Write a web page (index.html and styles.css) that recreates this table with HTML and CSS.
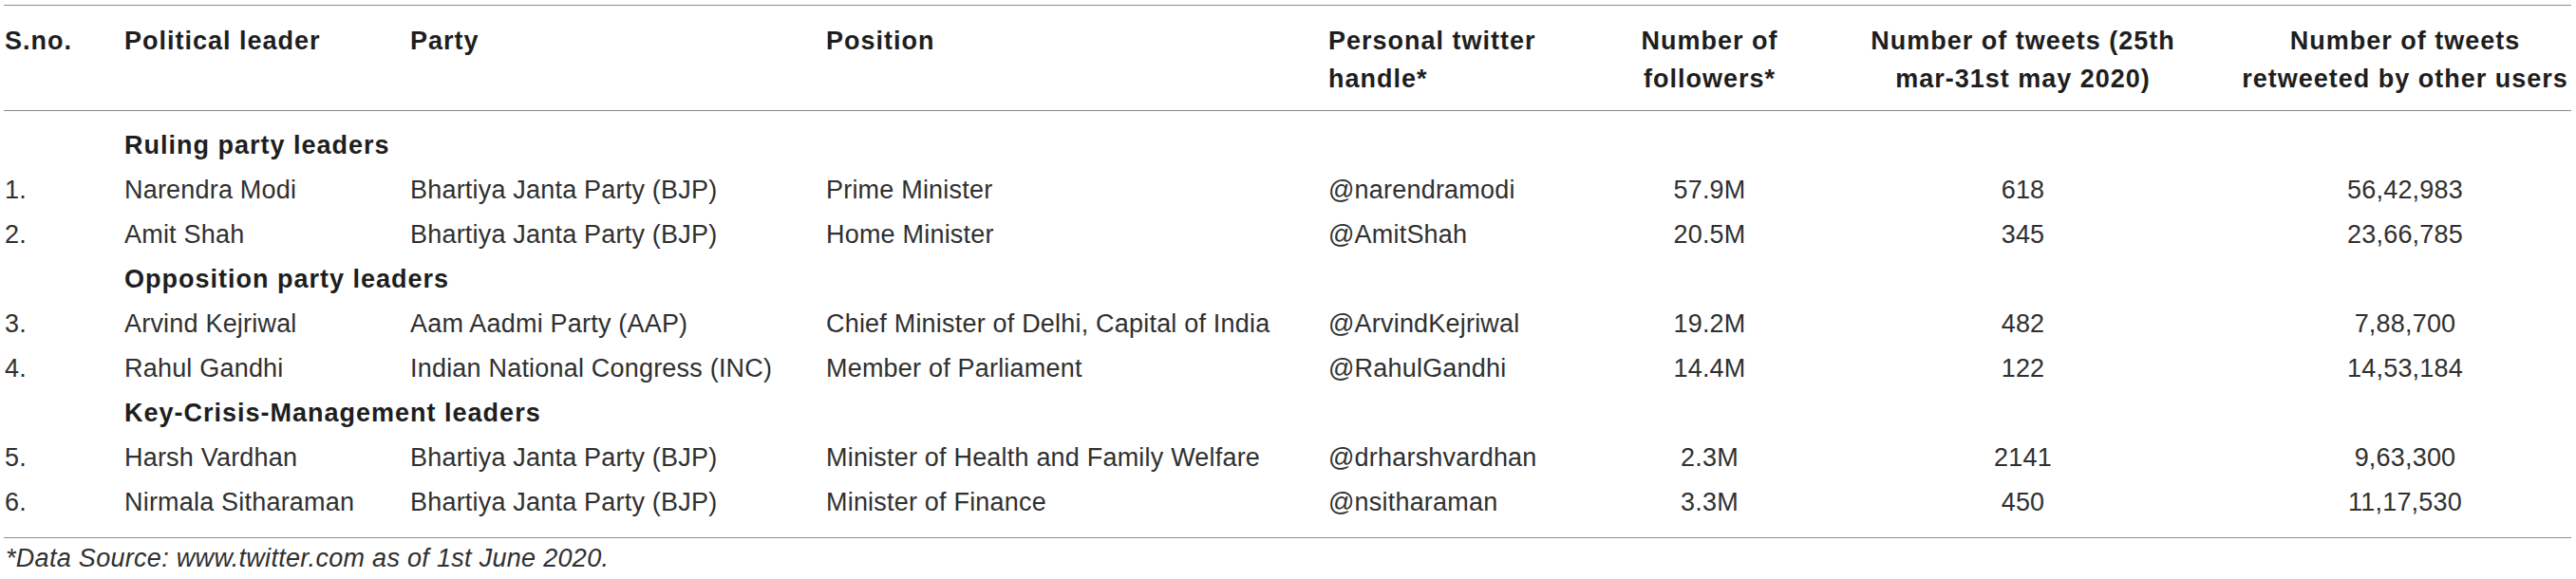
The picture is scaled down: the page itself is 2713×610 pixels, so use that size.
FILE: index.html
```html
<!DOCTYPE html>
<html lang="en">
<head>
<meta charset="utf-8">
<title>Political leaders on Twitter</title>
<link rel="stylesheet" href="styles.css">
</head>
<body>
<div class="wrap">
<table class="leaders">
  <colgroup>
    <col class="c-sno">
    <col class="c-name">
    <col class="c-party">
    <col class="c-pos">
    <col class="c-handle">
    <col class="c-foll">
    <col class="c-tweets">
    <col class="c-rt">
  </colgroup>
  <thead>
    <tr>
      <th>S.no.</th>
      <th>Political leader</th>
      <th>Party</th>
      <th>Position</th>
      <th>Personal twitter<br>handle*</th>
      <th class="num">Number of<br>followers*</th>
      <th class="num">Number of tweets (25th<br>mar-31st may 2020)</th>
      <th class="num rt">Number of tweets<br>retweeted by other users</th>
    </tr>
  </thead>
  <tbody>
    <tr class="group first">
      <td></td>
      <td colspan="7">Ruling party leaders</td>
    </tr>
    <tr>
      <td>1.</td>
      <td>Narendra Modi</td>
      <td>Bhartiya Janta Party (BJP)</td>
      <td>Prime Minister</td>
      <td>@narendramodi</td>
      <td class="num">57.9M</td>
      <td class="num">618</td>
      <td class="num rt">56,42,983</td>
    </tr>
    <tr>
      <td>2.</td>
      <td>Amit Shah</td>
      <td>Bhartiya Janta Party (BJP)</td>
      <td>Home Minister</td>
      <td>@AmitShah</td>
      <td class="num">20.5M</td>
      <td class="num">345</td>
      <td class="num rt">23,66,785</td>
    </tr>
    <tr class="group">
      <td></td>
      <td colspan="7">Opposition party leaders</td>
    </tr>
    <tr>
      <td>3.</td>
      <td>Arvind Kejriwal</td>
      <td>Aam Aadmi Party (AAP)</td>
      <td>Chief Minister of Delhi, Capital of India</td>
      <td>@ArvindKejriwal</td>
      <td class="num">19.2M</td>
      <td class="num">482</td>
      <td class="num rt">7,88,700</td>
    </tr>
    <tr>
      <td>4.</td>
      <td>Rahul Gandhi</td>
      <td>Indian National Congress (INC)</td>
      <td>Member of Parliament</td>
      <td>@RahulGandhi</td>
      <td class="num">14.4M</td>
      <td class="num">122</td>
      <td class="num rt">14,53,184</td>
    </tr>
    <tr class="group">
      <td></td>
      <td colspan="7">Key-Crisis-Management leaders</td>
    </tr>
    <tr>
      <td>5.</td>
      <td>Harsh Vardhan</td>
      <td>Bhartiya Janta Party (BJP)</td>
      <td>Minister of Health and Family Welfare</td>
      <td>@drharshvardhan</td>
      <td class="num">2.3M</td>
      <td class="num">2141</td>
      <td class="num rt">9,63,300</td>
    </tr>
    <tr class="last">
      <td>6.</td>
      <td>Nirmala Sitharaman</td>
      <td>Bhartiya Janta Party (BJP)</td>
      <td>Minister of Finance</td>
      <td>@nsitharaman</td>
      <td class="num">3.3M</td>
      <td class="num">450</td>
      <td class="num rt">11,17,530</td>
    </tr>
  </tbody>
</table>
<p class="footnote">*Data Source: www.twitter.com as of 1st June 2020.</p>
</div>
</body>
</html>
```
FILE: styles.css
```css
html, body {
  margin: 0;
  padding: 0;
  background: #ffffff;
}

body {
  font-family: "Liberation Sans", Arial, Helvetica, sans-serif;
  color: #303030;
}

.wrap {
  padding: 5px 0 0 4px;
}

.leaders {
  width: 2704px;
  table-layout: fixed;
  border-collapse: separate;
  border-spacing: 0;
  font-size: 27px;
  letter-spacing: 0.2px;
}

.c-sno { width: 126px; }
.c-name { width: 301px; }
.c-party { width: 438px; }
.c-pos { width: 529px; }
.c-handle { width: 252px; }
.c-foll { width: 300px; }
.c-tweets { width: 360px; }
.c-rt { width: 398px; }

.leaders th {
  font-weight: bold;
  letter-spacing: 1px;
  line-height: 40px;
  text-align: left;
  vertical-align: top;
  white-space: nowrap;
  padding: 17px 0 13px 1px;
  border-top: 1px solid #8c8c8c;
  border-bottom: 1px solid #8c8c8c;
  color: #1e1e1e;
}

.leaders td {
  line-height: 47px;
  padding: 0 0 0 1px;
  white-space: nowrap;
  vertical-align: top;
}

.leaders .num {
  text-align: center;
}

.leaders .rt {
  padding-left: 48px;
}

.leaders .group td {
  font-weight: bold;
  letter-spacing: 1px;
  color: #1e1e1e;
}

.leaders .first td {
  padding-top: 13px;
}

.leaders .last td {
  padding-bottom: 13px;
  border-bottom: 1px solid #8c8c8c;
}

.footnote {
  margin: 6px 0 0 0;
  padding-left: 2px;
  font-size: 27px;
  font-style: italic;
  line-height: 30px;
  letter-spacing: 0.3px;
}
```
